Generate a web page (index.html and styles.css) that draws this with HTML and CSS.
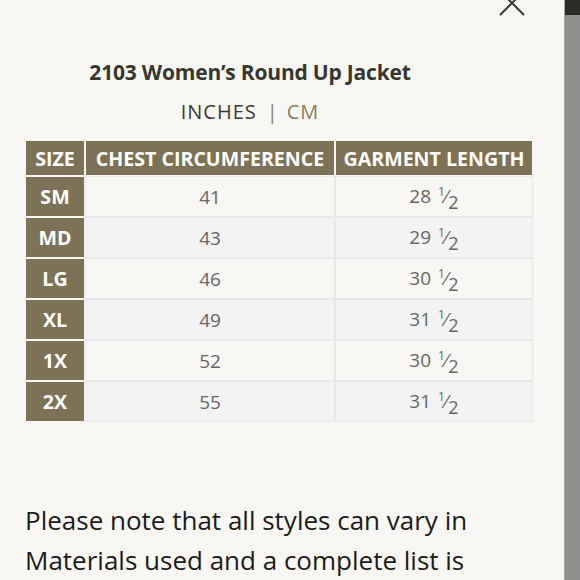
FILE: index.html
```html
<!DOCTYPE html>
<html>
<head>
<meta charset="utf-8">
<link rel="stylesheet" href="styles.css">
</head>
<body>
<div class="screen">
  <div class="modal">
    <button class="close" aria-label="Close">
      <svg width="28" height="28" viewBox="0 0 28 28"><path d="M2 2 L26 26 M26 2 L2 26" stroke="#3a3a33" stroke-width="2" fill="none"/></svg>
    </button>
    <div class="head">
      <h1 class="title">2103 Women’s Round Up Jacket</h1>
      <div class="units"><span class="unit">INCHES</span><span class="sep">|</span><span class="unit alt">CM</span></div>
    </div>
    <table class="chart">
      <thead>
        <tr><th class="c-size">SIZE</th><th class="c-chest">CHEST CIRCUMFERENCE</th><th class="c-len">GARMENT LENGTH</th></tr>
      </thead>
      <tbody>
        <tr><th>SM</th><td>41</td><td>28 <span class="frac"><sup>1</sup>⁄<sub>2</sub></span></td></tr>
        <tr><th>MD</th><td>43</td><td>29 <span class="frac"><sup>1</sup>⁄<sub>2</sub></span></td></tr>
        <tr><th>LG</th><td>46</td><td>30 <span class="frac"><sup>1</sup>⁄<sub>2</sub></span></td></tr>
        <tr><th>XL</th><td>49</td><td>31 <span class="frac"><sup>1</sup>⁄<sub>2</sub></span></td></tr>
        <tr><th>1X</th><td>52</td><td>30 <span class="frac"><sup>1</sup>⁄<sub>2</sub></span></td></tr>
        <tr><th>2X</th><td>55</td><td>31 <span class="frac"><sup>1</sup>⁄<sub>2</sub></span></td></tr>
      </tbody>
    </table>
    <p class="note">Please note that all styles can vary in Materials used and a complete list is available on each product page.</p>
  </div>
  <div class="scrollbar"><div class="scroll-top"></div></div>
</div>
</body>
</html>
```
FILE: styles.css
```css
html, body {
  margin: 0;
  padding: 0;
  height: 100%;
  overflow: hidden;
}
body {
  background: #f8f7f3;
  font-family: "Open Sans", "Noto Sans", sans-serif;
}
.screen {
  display: flex;
  height: 580px;
}
.modal {
  position: relative;
  width: 564px;
  flex: none;
  background: #f8f7f3;
  overflow: hidden;
}
.scrollbar {
  flex: 1;
  background: #8f8f8d;
  border-left: 1px solid #a8a8a5;
  display: flex;
  flex-direction: column;
}
.scroll-top {
  height: 15px;
  background: #2b2b27;
}
.close {
  position: absolute;
  left: 498px;
  top: -11px;
  border: 0;
  padding: 0;
  background: none;
  width: 28px;
  height: 28px;
}
.close svg { display: block; }
.head {
  width: 500px;
  padding-top: 56px;
  text-align: center;
}
.title {
  margin: 0;
  font-size: 21px;
  font-weight: 700;
  letter-spacing: -0.2px;
  color: #36372e;
  line-height: 32px;
}
.units {
  margin-top: 9px;
  font-size: 20px;
  font-weight: 400;
  letter-spacing: 1px;
  color: #3a3a33;
  line-height: 30px;
}
.sep {
  color: #8a7e62;
  margin: 0 8px 0 10px;
}
.unit.alt { color: #8a7e62; }
.chart {
  margin: 12px 0 0 24px;
  width: 510px;
  border-collapse: separate;
  border-spacing: 2px;
}
.chart th {
  background: #7d7256;
  color: #fff;
  font-weight: 700;
  font-size: 19.6px;
  text-align: center;
  padding: 0;
}
.chart thead th {
  height: 34px;
}
.c-size { width: 58px; }
.c-chest { width: 248px; }
.chart tbody th, .chart td {
  height: 39px;
}
.chart td {
  text-align: center;
  font-size: 19px;
  color: #666;
  background: #f8f7f3;
  padding: 0;
}
.chart tbody tr:nth-child(even) td {
  background: #f3f3f3;
}
.chart tbody tr td {
  box-shadow: 0 0 0 1px #e8e8e9;
}
.frac {
  display: inline-block;
  margin-left: 2px;
  line-height: 1;
}
.frac sup {
  font-size: 12px;
  vertical-align: 7px;
}
.frac sub {
  font-size: 18px;
  vertical-align: -6px;
  margin-left: 1px;
}
.note {
  margin: 77px 0 0 25px;
  width: 530px;
  font-size: 26px;
  line-height: 40px;
  color: #1c1c1c;
}
```
